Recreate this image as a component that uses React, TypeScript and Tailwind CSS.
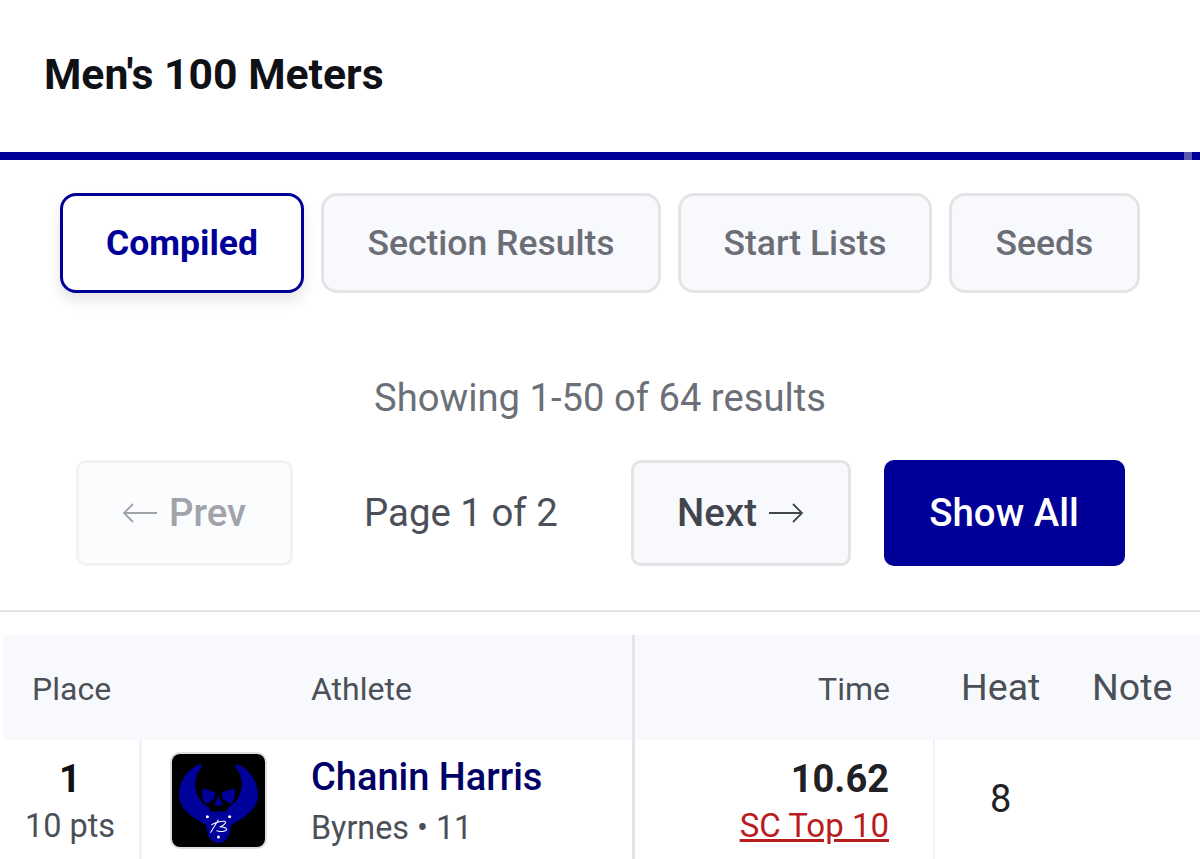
import * as React from 'react'

const Arrow: React.FunctionComponent<{ left?: boolean }> = ({ left }) => (
  <svg width="36" height="24" viewBox="0 0 36 24" fill="none" stroke="currentColor" strokeWidth="1.8">
    {left ? (
      <path d="M35 12H2M11 3l-9 9 9 9" />
    ) : (
      <path d="M1 12h33M25 3l9 9-9 9" />
    )}
  </svg>
)

const Logo: React.FunctionComponent = () => (
  <svg viewBox="0 0 92 92" className="h-full w-full">
    <rect width="92" height="92" fill="#000" />
    <path
      d="M28 10C16 14 8 26 7 38c-1 10 5 18 13 24 6 4 11 6 14 9 0 9 4 17 12 17s12-8 12-17c3-3 8-5 14-9 8-6 14-14 13-24-1-12-9-24-21-28-6 8-30 8-36 0z"
      fill="#00009a"
    />
    <ellipse cx="46" cy="30" rx="23" ry="25" fill="#000" />
    <path d="M35 47l3 10h16l3-10z" fill="#000" />
    <path d="M30 34l13 4-1 6-8 6-4-6zM62 34l-13 4 1 6 8 6 4-6zM46 41l4.500 10h-9z" fill="#00009a" />
    <circle cx="35" cy="62" r="1.500" fill="#fff" />
    <circle cx="57" cy="62" r="1.500" fill="#fff" />
    <circle cx="46" cy="82" r="1.500" fill="#fff" />
    <path
      d="M38 78l8-13M39 70c5-3 15-5 14-2-1 2-4 4-6 4 3 0 8 1 7 3-1 2-7 2-10 1"
      fill="none"
      stroke="#fff"
      strokeWidth="1"
    />
  </svg>
)

const tabs = [
  { label: 'Section Results', width: 'w-[340px]' },
  { label: 'Start Lists', width: 'w-[254px]' },
  { label: 'Seeds', width: 'w-[191px]' },
]

export default function App() {
  return (
    <div className="h-[859px] w-[1200px] overflow-hidden bg-white font-['Roboto',sans-serif]">
      <header className="flex h-[152px] items-center px-11 pb-[4px]">
        <h1 className="text-[42.700px] font-bold leading-none text-[#0f1117]">Men's 100 Meters</h1>
      </header>
      <div className="relative h-2 bg-[#000099]">
        <div className="absolute left-[1184px] top-0 h-2 w-2 bg-[#5a5ab0]" />
      </div>

      <nav className="flex gap-[17px] pl-[60px] pt-[33px]">
        <button className="h-[100px] w-[244px] rounded-2xl border-[3px] border-[#000099] bg-white pt-[2px] text-[35.500px] font-bold text-[#000099] shadow-[0_8px_14px_rgba(0,0,0,0.1)]">
          Compiled
        </button>
        {tabs.map((tab) => (
          <button
            key={tab.label}
            className={`h-[100px] ${tab.width} rounded-2xl border-[3px] border-[#e3e4e6] bg-[#f8f9fc] pt-[2px] text-[35.500px] font-medium text-[#6b6e76]`}
          >
            {tab.label}
          </button>
        ))}
      </nav>

      <p className="mt-[82px] text-center text-[38.200px] leading-[46px] text-[#6b7078]">
        Showing 1-50 of 64 results
      </p>

      <div className="mt-[39px] flex h-[106px] items-center pl-[76px]">
        <button className="flex h-full w-[217px] items-center justify-center gap-[11px] rounded-[10px] border-[3px] border-[#f1f2f3] bg-[#fbfcfe] pr-[1px] text-[38.400px] font-medium text-[#a1a3aa]">
          <Arrow left />
          Prev
        </button>
        <span className="ml-[71px] w-[267px] text-[38.400px] text-[#4b5058]">Page 1 of 2</span>
        <button className="flex h-full w-[220px] items-center justify-center gap-[11px] rounded-[10px] border-[3px] border-[#e3e4e6] bg-[#f8f9fc] pr-[1px] text-[38.400px] font-medium text-[#42454e]">
          Next
          <Arrow />
        </button>
        <button className="ml-[33px] h-full w-[241px] rounded-[10px] bg-[#000099] pr-[1px] text-[38.400px] font-medium text-white">
          Show All
        </button>
      </div>

      <div className="mt-[44px] h-[2px] bg-[#e3e4e6]" />

      <div className="mt-[23px]">
        <div className="grid h-[105px] grid-cols-[140px_495px_299px_158px_108px] items-center bg-[#f8f9fc] text-[#4b5058]">
          <div className="flex h-full items-center border-l-[3px] border-white pl-[29px] pt-[2px] text-[32px]">Place</div>
          <div className="flex h-full items-center border-r-[3px] border-[#e3e4e6] pl-[171px] pt-[2px] text-[32px]">
            Athlete
          </div>
          <div className="pr-[44px] pt-[2px] text-right text-[32px]">Time</div>
          <div className="pl-[27px] text-[37.500px]">Heat</div>
          <div className="text-[37.500px]">Note</div>
        </div>
        <div className="grid h-[119px] grid-cols-[142px_493px_300px_157px_108px] text-[#1f2125]">
          <div className="border-r-[3px] border-[#f1f2f5] pl-[1px] pt-[18px] text-center">
            <div className="text-[38px] font-bold leading-[42px] text-[#111]">1</div>
            <div className="mt-[4px] text-[32.500px] leading-[44px] text-[#4b5058]">10 pts</div>
          </div>
          <div className="flex border-r-[3px] border-[#e3e4e6] pl-[28px] pt-[12px]">
            <div className="h-[97px] w-[97px] overflow-hidden rounded-[10px] border-2 border-[#dedfe2]">
              <Logo />
            </div>
            <div className="pl-[44px] pt-[3px]">
              <div className="text-[38px] font-medium leading-[44px] text-[#000066]">Chanin Harris</div>
              <div className="mt-[7px] text-[32.300px] leading-[44px] text-[#4b5058]">Byrnes • 11</div>
            </div>
          </div>
          <div className="border-r-2 border-[#f1f2f5] pr-[44px] pt-[18px] text-right">
            <div className="text-[38px] font-bold leading-[42px]">10.62</div>
            <a className="mt-[4px] block text-[33px] leading-[44px] text-[#b91c1c] underline">SC Top 10</a>
          </div>
          <div className="pl-[55px] pt-[36px] text-[38px] leading-[46px]">8</div>
          <div />
        </div>
      </div>
    </div>
  )
}
